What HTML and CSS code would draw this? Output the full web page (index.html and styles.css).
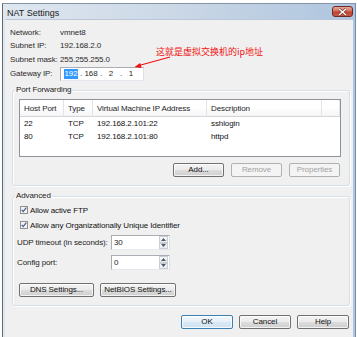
FILE: index.html
```html
<!DOCTYPE html>
<html>
<head>
<meta charset="utf-8">
<title>NAT Settings</title>
<link rel="stylesheet" href="styles.css">
</head>
<body>
<div class="window">
  <div class="titlebar">
    <span class="title">NAT Settings</span>
    <span class="close">
      <svg width="11" height="8" viewBox="0 0 11 8"><path d="M2 1 L9 7 M9 1 L2 7" stroke="#6b2a22" stroke-width="2.6"/><path d="M2 1 L9 7 M9 1 L2 7" stroke="#fff" stroke-width="1.5"/></svg>
    </span>
  </div>
  <div class="client">
    <div class="info">
      <span>Network:</span><span>vmnet8</span>
      <span>Subnet IP:</span><span>192.168.2.0</span>
      <span>Subnet mask:</span><span>255.255.255.0</span>
      <span>Gateway IP:</span>
      <span class="ipbox"><span class="oct sel">192</span><span class="dot">.</span><span class="oct">168</span><span class="dot">.</span><span class="oct">2</span><span class="dot">.</span><span class="oct">1</span></span>
    </div>

    <fieldset class="group pf">
      <legend>Port Forwarding</legend>
      <div class="list">
        <table>
          <colgroup><col class="c1"><col class="c2"><col class="c3"><col class="c4"><col></colgroup>
          <thead>
            <tr><th>Host Port</th><th>Type</th><th>Virtual Machine IP Address</th><th>Description</th><th></th></tr>
          </thead>
          <tbody>
            <tr><td>22</td><td>TCP</td><td>192.168.2.101:22</td><td>sshlogin</td><td></td></tr>
            <tr><td>80</td><td>TCP</td><td>192.168.2.101:80</td><td>httpd</td><td></td></tr>
          </tbody>
        </table>
      </div>
      <div class="btnrow">
        <span class="btn">Add...</span>
        <span class="btn disabled">Remove</span>
        <span class="btn disabled">Properties</span>
      </div>
    </fieldset>

    <fieldset class="group adv">
      <legend>Advanced</legend>
      <div class="check first">
        <svg width="8" height="8" viewBox="0 0 8 8"><rect x=".5" y=".5" width="7" height="7" fill="#f3f3f3" stroke="#8e8f8f"/><path d="M1.7 3.9 L3.2 5.6 L6.3 1.7" stroke="#4a5f97" stroke-width="1.3" fill="none"/></svg>
        <span>Allow active FTP</span>
      </div>
      <div class="check">
        <svg width="8" height="8" viewBox="0 0 8 8"><rect x=".5" y=".5" width="7" height="7" fill="#f3f3f3" stroke="#8e8f8f"/><path d="M1.7 3.9 L3.2 5.6 L6.3 1.7" stroke="#4a5f97" stroke-width="1.3" fill="none"/></svg>
        <span>Allow any Organizationally Unique Identifier</span>
      </div>
      <div class="field first">
        <span class="flabel">UDP timeout (in seconds):</span>
        <span class="spin"><span class="val">30</span>
          <span class="arrows">
            <span class="arr"><svg width="5" height="3" viewBox="0 0 5 3"><path d="M0 3 L2.5 0 L5 3Z" fill="#4d5a6b"/></svg></span>
            <span class="arr"><svg width="5" height="3" viewBox="0 0 5 3"><path d="M0 0 L2.5 3 L5 0Z" fill="#4d5a6b"/></svg></span>
          </span>
        </span>
      </div>
      <div class="field">
        <span class="flabel">Config port:</span>
        <span class="spin"><span class="val">0</span>
          <span class="arrows">
            <span class="arr"><svg width="5" height="3" viewBox="0 0 5 3"><path d="M0 3 L2.5 0 L5 3Z" fill="#4d5a6b"/></svg></span>
            <span class="arr"><svg width="5" height="3" viewBox="0 0 5 3"><path d="M0 0 L2.5 3 L5 0Z" fill="#4d5a6b"/></svg></span>
          </span>
        </span>
      </div>
      <div class="advbtns">
        <span class="btn dns">DNS Settings...</span>
        <span class="btn netbios">NetBIOS Settings...</span>
      </div>
    </fieldset>

    <div class="dlgbtns">
      <span class="btn default">OK</span>
      <span class="btn">Cancel</span>
      <span class="btn">Help</span>
    </div>
  </div>

  <div class="note">这就是虚拟交换机的ip地址</div>
  <svg class="arrow" width="44" height="18" viewBox="0 0 44 18">
    <path d="M39 5 L8 13.5" stroke="#f01010" stroke-width="1.2" fill="none"/>
    <polygon points="3.5,15 10.6,15.9 9.2,10.9" fill="#f01010"/>
  </svg>
</div>
</body>
</html>
```

FILE: styles.css
```css
* { box-sizing: border-box; }
html, body { margin: 0; padding: 0; }
body {
  background: #fff;
  width: 357px;
  height: 337px;
  overflow: hidden;
  font-family: "Liberation Sans", Arial, sans-serif;
  font-size: 8px;
  letter-spacing: -0.1px;
  color: #1a1a1a;
}

.window {
  position: relative;
  margin: 3px 0 0 2px;
  width: 354px;
  height: 340px;
  border-top: 1px solid #8494a8;
  border-left: 1px solid #5f6b79;
  border-right: 1px solid #6f8db3;
  padding: 0 2px;
  background: linear-gradient(to right, #dfe7f0 0%, #cdd9e7 45%, #aec5df 100%);
}

.titlebar {
  height: 15px;
  display: flex;
  align-items: flex-start;
}
.title {
  font-size: 9px;
  line-height: 12px;
  letter-spacing: 0;
  padding: 3px 0 0 2px;
  color: #1a1a1a;
}
.close {
  margin: 2px 0 0 auto;
  width: 21px;
  height: 11px;
  border: 1px solid #6d2a22;
  border-radius: 3px;
  background: linear-gradient(#e5a898 0%, #d4705f 45%, #c0412f 55%, #c75a48 100%);
  display: flex;
  align-items: center;
  justify-content: center;
}

.client {
  background: #f0f0f0;
  height: 330px;
  border-top: 1px solid #b9c7d8;
  padding-top: 6px;
}

.info {
  display: grid;
  grid-template-columns: 50px auto;
  grid-template-rows: 13px 13px 15px 14px;
  align-items: center;
  padding-left: 5px;
  line-height: 10px;
  color: #2a2a2a;
}
.ipbox {
  width: 84px;
  height: 14px;
  background: #fff;
  border: 1px solid #abadb3;
  border-right-color: #dbdfe6;
  border-bottom-color: #e3e9ef;
  display: flex;
  align-items: center;
  padding-left: 3px;
}
.oct { width: 14px; text-align: center; line-height: 10px; }
.oct.sel { background: #3399ff; color: #fff; }
.dot { width: 6px; text-align: center; }

.group {
  margin: 4px 3px 0 7px;
  padding: 0;
  min-width: 0;
  border: 1px solid #d5dfe5;
  border-radius: 3px;
  box-shadow: inset 1px 1px 0 #fff, 1px 1px 0 #fff;
}
.group legend {
  margin-left: 2px;
  padding: 0 1px;
  line-height: 10px;
  font-size: 8px;
  color: #222;
}
.pf { padding-bottom: 8px; }
.adv { margin-top: 5px; padding-bottom: 8px; }

.list {
  margin: 4px 8px 0 6px;
  height: 58px;
  border: 1px solid #8e939a;
  background: #fff;
}
.list table {
  width: 100%;
  table-layout: fixed;
  border-collapse: separate;
  border-spacing: 0;
}
.c1 { width: 44px; }
.c2 { width: 29px; }
.c3 { width: 114px; }
.c4 { width: 115px; }
.list th {
  height: 17px;
  padding: 0 0 0 4px;
  text-align: left;
  font-weight: normal;
  white-space: nowrap;
  overflow: hidden;
  color: #1e1e1e;
  background: linear-gradient(#ffffff 0%, #ffffff 45%, #f4f5f7 100%);
  border-right: 1px solid #e2e4e7;
  border-bottom: 1px solid #d5d5d5;
}
.list td {
  height: 13px;
  padding: 0 0 0 4px;
  line-height: 12px;
  white-space: nowrap;
  color: #111;
}

.btn {
  height: 14px;
  border: 1px solid #707070;
  border-radius: 2px;
  background: linear-gradient(#f4f4f4 0%, #ebebeb 48%, #dddddd 52%, #cfcfcf 100%);
  box-shadow: inset 0 0 0 1px rgba(255,255,255,0.75);
  display: flex;
  align-items: center;
  justify-content: center;
  line-height: 10px;
  color: #111;
}
.btn.disabled {
  border-color: #adb2b5;
  background: #f4f4f4;
  box-shadow: none;
  color: #a3a3a3;
}
.btn.default {
  border-color: #3c7fb1;
  background: linear-gradient(#f2f8fd 0%, #e6f0f9 48%, #d9e8f5 52%, #d0e2f2 100%);
}

.btnrow {
  display: flex;
  justify-content: flex-end;
  gap: 7px;
  margin: 6px 9px 0 0;
}
.btnrow .btn { width: 51px; }

.check {
  display: flex;
  align-items: center;
  gap: 2px;
  height: 12px;
  margin: 3px 0 0 7px;
  color: #111;
}
.check.first { margin-top: 3px; }

.field {
  display: flex;
  align-items: center;
  margin: 5px 0 0 4px;
  height: 15px;
}
.field.first { margin-top: 4px; }
.flabel { width: 94px; color: #222; }
.spin {
  position: relative;
  width: 59px;
  height: 15px;
  background: #fff;
  border: 1px solid #abadb3;
  border-right-color: #dbdfe6;
  border-bottom-color: #e3e9ef;
  display: flex;
  align-items: center;
}
.val { padding-left: 2px; flex: 1; }
.arrows {
  display: flex;
  flex-direction: column;
  width: 9px;
  height: 13px;
  margin-right: 1px;
}
.arr {
  flex: 1;
  border: 1px solid #c9ced5;
  background: linear-gradient(#fafafa, #e8eaed);
  display: flex;
  align-items: center;
  justify-content: center;
}

.advbtns {
  display: flex;
  gap: 6px;
  margin: 13px 0 0 6px;
}
.dns { width: 75px; }
.netbios { width: 76px; }

.dlgbtns {
  display: flex;
  justify-content: flex-end;
  gap: 6px;
  margin: 9px 4px 0 0;
}
.dlgbtns .btn { width: 52px; }

.note {
  position: absolute;
  left: 153px;
  top: 42px;
  font-family: "Noto Sans CJK SC", "Liberation Sans", sans-serif;
  font-size: 9px;
  line-height: 12px;
  letter-spacing: 0;
  color: #f01010;
  white-space: nowrap;
}
.arrow {
  position: absolute;
  left: 128px;
  top: 48px;
}
```
